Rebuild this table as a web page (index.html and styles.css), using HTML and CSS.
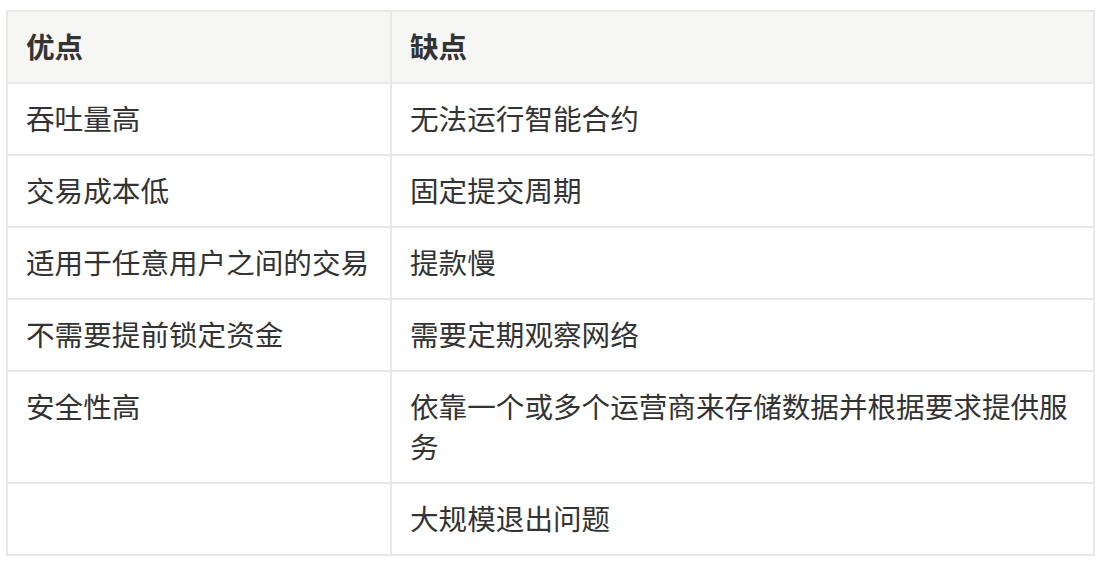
FILE: index.html
```html
<!DOCTYPE html>
<html lang="zh-CN">
<head>
<meta charset="utf-8">
<link rel="stylesheet" href="styles.css">
</head>
<body>
<table class="cmp">
  <colgroup><col class="c1"><col class="c2"></colgroup>
  <thead>
    <tr><th>优点</th><th>缺点</th></tr>
  </thead>
  <tbody>
    <tr><td>吞吐量高</td><td>无法运行智能合约</td></tr>
    <tr><td>交易成本低</td><td>固定提交周期</td></tr>
    <tr><td>适用于任意用户之间的交易</td><td>提款慢</td></tr>
    <tr><td>不需要提前锁定资金</td><td>需要定期观察网络</td></tr>
    <tr><td>安全性高</td><td>依靠一个或多个运营商来存储数据并根据要求提供服务</td></tr>
    <tr><td></td><td>大规模退出问题</td></tr>
  </tbody>
</table>
</body>
</html>
```

FILE: styles.css
```css
html, body {
  margin: 0;
  padding: 0;
  background: #ffffff;
}
body {
  padding: 10px 8px 0 6px;
  font-family: "Noto Sans CJK SC", "Noto Sans", sans-serif;
  color: #333333;
}
.cmp {
  width: 1089px;
  border-collapse: collapse;
  table-layout: fixed;
  font-size: 28.6px;
  line-height: 40px;
}
.c1 { width: 384px; }
.cmp th, .cmp td {
  border: 2px solid #e8e8e6;
  padding: 14px 18px 16px;
  text-align: left;
  vertical-align: top;
}
.cmp th {
  background: #f6f6f4;
  font-weight: 700;
}
```
